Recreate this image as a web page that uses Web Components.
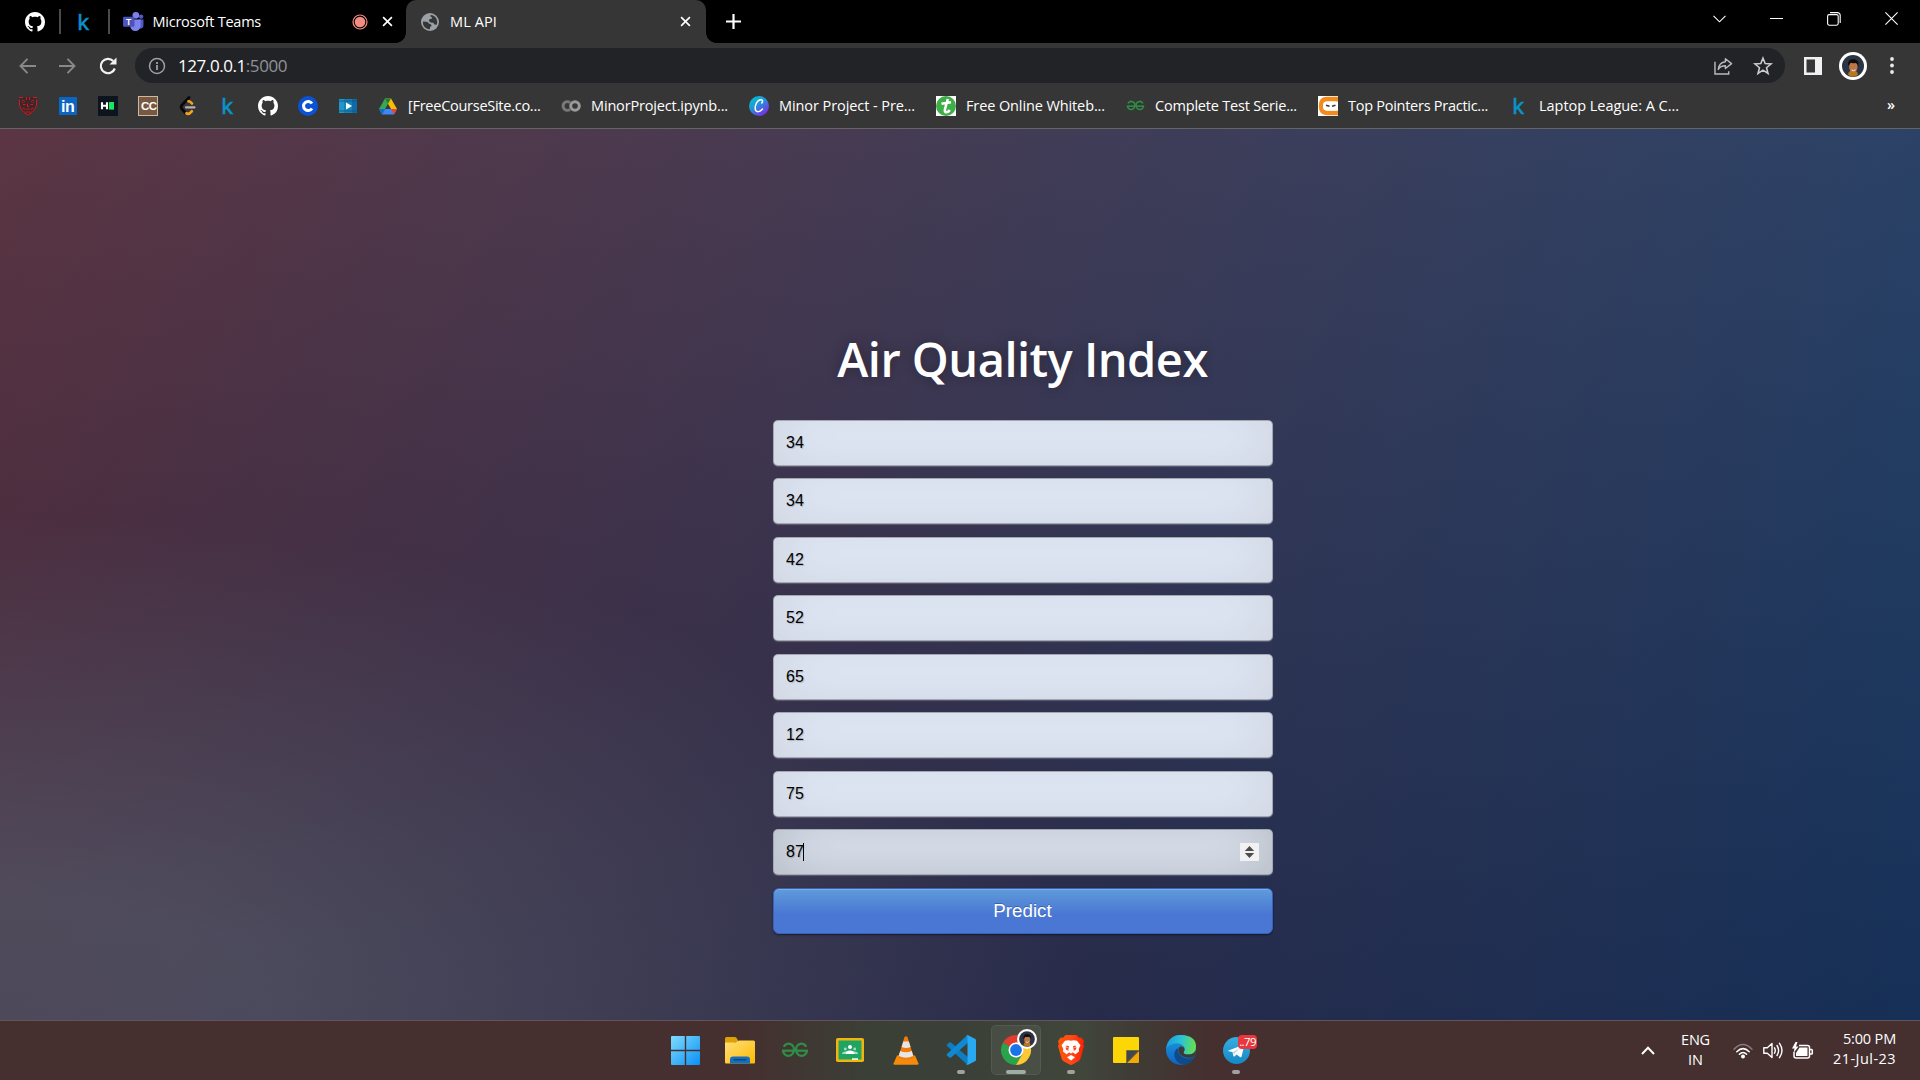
<!DOCTYPE html>
<html lang="en">
<head>
<meta charset="utf-8">
<title>ML API</title>
<style>
html,body{margin:0;height:100%;overflow:hidden;background:#000}
body{font-family:"Open Sans","Noto Sans",sans-serif;color:#fff}
</style>
</head>
<body>
<desktop-screen></desktop-screen>
<script>
const face = `<circle cx="14" cy="14" r="14" fill="#fff"/><circle cx="14" cy="14" r="11" fill="#2b3344"/><path d="M9 22.500q1-4.500 5-4.500t5 4.500q-2 2.300-5 2.300t-5-2.300z" fill="#b5791c"/><ellipse cx="14.300" cy="15" rx="4.200" ry="5.600" fill="#bb7748"/><path d="M9.300 14q-1.500-6.500 4.700-7 6.700.5 5.500 7.500-.8-3-2.500-3.600-3.500.6-5.300-.1-1 1.200-2.400 3.200z" fill="#120d0d"/><path d="M12.500 18q2.200 1.600 4-.2" stroke="#fff" stroke-width=".9" fill="none"/>`;
const gfg = `<g fill="none" stroke="#2f8d46" stroke-width="2.300"><path d="M1 7.700h26"/><path d="M2.800 3.800a5.300 5.300 0 0 1 9.900 3.700 5.300 5.300 0 1 1-10.600 0"/><path d="M25.200 3.800a5.300 5.300 0 0 0-9.900 3.700 5.300 5.300 0 1 0 10.600 0"/></g>`;
const ICONS = {
  github:['0 0 16 16','<path fill="#fff" d="M8 0C3.580 0 0 3.580 0 8c0 3.540 2.290 6.530 5.470 7.590.4.070.55-.17.55-.38 0-.19-.010-.82-.010-1.490-2.010.37-2.530-.49-2.690-.94-.090-.23-.48-.94-.82-1.130-.28-.15-.68-.52-.010-.53.63-.010 1.080.58 1.230.82.72 1.210 1.870.87 2.330.66.070-.52.28-.87.51-1.070-1.780-.2-3.640-.89-3.640-3.950 0-.87.31-1.590.82-2.150-.080-.2-.36-1.020.080-2.120 0 0 .67-.21 2.200.82.64-.18 1.320-.27 2-.27s1.360.090 2 .27c1.530-1.040 2.200-.82 2.200-.82.44 1.100.16 1.920.080 2.120.51.56.82 1.270.82 2.150 0 3.070-1.870 3.750-3.650 3.950.29.25.54.73.54 1.480 0 1.070-.010 1.930-.010 2.200 0 .21.15.46.55.38A8.010 8.010 0 0 0 16 8c0-4.420-3.580-8-8-8z"/>'],
  kaggle:['0 0 20 20','<text x="3.300" y="18.200" font-family="Open Sans" font-size="22.500" fill="#0a94cc" stroke="#0a94cc" stroke-width=".7">k</text>'],
  teams:['0 0 22 20','<circle cx="13.500" cy="3.500" r="3.500" fill="#7b83eb"/><circle cx="19" cy="4.800" r="2.300" fill="#5059c9"/><path d="M16 8h5.500v6.500a3 3 0 0 1-5.500 1.500z" fill="#5059c9"/><path d="M7.500 8h11v6.500a5.500 5.500 0 0 1-11 0z" fill="#7b83eb"/><rect x="0" y="5" width="12" height="10.500" rx="1" fill="#4b53bc"/><text x="3" y="13.500" font-family="Liberation Sans" font-weight="bold" font-size="9" fill="#fff">T</text>'],
  rec:['0 0 16 16','<circle cx="8" cy="8" r="7" fill="none" stroke="#f28b82" stroke-width="1.200"/><circle cx="8" cy="8" r="5.300" fill="#f28b82"/>'],
  close:['0 0 12 12','<path d="M1.200 1.200l9.600 9.600M10.800 1.200L1.200 10.800" stroke="#fff" stroke-width="1.800"/>'],
  globe:['0 0 18 18','<circle cx="9" cy="9" r="9" fill="#9aa0a6"/><path d="M2 8.500l3.300.3q2 .2 2.500 1.700l2 .8q1 .8.600 2l-1.400.8v2.200q-4.500-.2-6.300-3.500Q1.700 11 2 8.500zM9.500 1.900q4 .1 6 3.800 1.200 2.800.3 6l-2.300-.3-1.300-1.600-2.700-.3-1.700-1.700.7-1.500 2.200-.5.300-1.500-1.500-.8z" fill="#363636"/>'],
  plus:['0 0 15 15','<path d="M7.500 0v15M0 7.500h15" stroke="#fff" stroke-width="2.200"/>'],
  chev:['0 0 13 8','<path d="M.5 .8l6 6 6-6" fill="none" stroke="#fff" stroke-width="1.100"/>'],
  min:['0 0 13 2','<path d="M0 .5h13" stroke="#fff"/>'],
  restore:['0 0 14 14','<rect x=".6" y="2.600" width="10.600" height="10.600" rx="1.600" fill="none" stroke="#fff" stroke-width="1.100"/><path d="M3 .6h7.500a2.700 2.700 0 0 1 2.700 2.700V11" fill="none" stroke="#fff" stroke-width="1.100"/>'],
  winx:['0 0 13 13','<path d="M.4 .4l12.200 12.200M12.600 .4L.4 12.600" stroke="#fff" stroke-width="1.100"/>'],
  back:['0 0 17 16','<path d="M8.500 .8L1.500 8l7 7.200M1.500 8H17" fill="none" stroke="#898989" stroke-width="1.900"/>'],
  fwd:['0 0 17 16','<path d="M8.500 .8l7 7.200-7 7.200M15.500 8H0" fill="none" stroke="#898989" stroke-width="1.900"/>'],
  reload:['0 0 18 18','<path d="M15.800 11.500A7.200 7.200 0 1 1 14.200 4" fill="none" stroke="#f1f3f4" stroke-width="2.200"/><path d="M17.500 .6v7h-7z" fill="#f1f3f4"/>'],
  info:['0 0 18 18','<circle cx="9" cy="9" r="7.500" fill="none" stroke="#9aa0a6" stroke-width="1.500"/><path d="M9 8v5M9 5v1.900" stroke="#9aa0a6" stroke-width="1.800"/>'],
  share:['0 0 20 19','<path d="M1 5v13h14.500v-3" fill="none" stroke="#b9bbbd" stroke-width="1.500"/><path d="M12 1.800l6.500 5.200-6.500 5.200V9.300c-4 0-6 1.200-7.500 3.700C5 8.500 7.500 5.500 12 5z" fill="none" stroke="#b9bbbd" stroke-width="1.500" stroke-linejoin="round"/>'],
  star:['0 0 20 20','<path d="M10 2.200l2.200 5.400 5.800.4-4.500 3.700 1.500 5.700-5-3.200-5 3.200 1.500-5.700L2 8l5.800-.4z" fill="none" stroke="#c9cbcd" stroke-width="1.600"/>'],
  panel:['0 0 18 18','<rect width="18" height="18" fill="#f1f1f4"/><rect x="2.500" y="2.500" width="8.500" height="13" fill="#363636"/>'],
  avatar:['0 0 28 28',face],
  dots:['0 0 4 17','<circle cx="2" cy="2" r="1.900" fill="#e8eaed"/><circle cx="2" cy="8.500" r="1.900" fill="#e8eaed"/><circle cx="2" cy="15" r="1.900" fill="#e8eaed"/>'],
  shield:['0 0 20 20','<path d="M1 1l5 .5L10 .5l4 1 5-.5-.5 9Q17 16 10 19.500 3 16 1.500 10z" fill="#3d2528"/><g stroke="#d01a20" fill="none" stroke-width="1"><path d="M1 1.500h4M15 1.500h4M1.500 3.500v6q1.500 6 8.500 9.500 7-3.500 8.500-9.500v-6M4 4l3 1.500M16 4l-3 1.500M5 8.500h2.500M12.500 8.500H15M4.500 12l3 1.500M15.500 12l-3 1.500M8 16h4M8.500 1v3M11.500 1v3M9.500 7.500v3h1.500M8.500 13h3M6.500 15.500l1 1M13.500 15.500l-1 1M4 6.500h1M15 6.500h1"/></g>'],
  linkedin:['0 0 18 18','<rect width="18" height="18" rx="1" fill="#0a66c2"/><text x="2" y="15" font-family="Liberation Sans" font-weight="bold" font-size="16" letter-spacing="-.4" fill="#fff">in</text>'],
  hr:['0 0 20 20','<rect width="20" height="20" fill="#0e141e"/><path d="M4 6.300v7M9 6.300v7M4 9.800h5" stroke="#fff" stroke-width="2.100"/><rect x="11" y="6" width="5" height="7.600" fill="#18e660"/>'],
  cc:['0 0 20 20','<rect x=".5" y=".5" width="19" height="19" fill="#785940" stroke="#cdb9a8"/><text x="3" y="14" font-family="Liberation Sans" font-weight="bold" font-size="11.500" letter-spacing="-.6" fill="#fff">CC</text>'],
  leet:['0 0 20 20','<path d="M11 1.500L3.500 9.500q-1 1.500 0 3L7.500 17" fill="none" stroke="#080808" stroke-width="2.800" stroke-linecap="round"/><path d="M10.500 5.300q1.500-.3 3.500 2.200M8.500 17.300q2.200 1.600 5.300-2" fill="none" stroke="#f5a31b" stroke-width="2.700" stroke-linecap="round"/><path d="M8 11.300h8.500" stroke="#b3b3b3" stroke-width="2.200" stroke-linecap="round"/>'],
  coin:['0 0 20 20','<circle cx="10" cy="10" r="10" fill="#0a52d6"/><path d="M14 7.500A4.600 4.600 0 1 0 14 12.500" fill="none" stroke="#fff" stroke-width="3"/>'],
  play:['0 0 18 14','<rect width="18" height="14" fill="#0f6ba8"/><path d="M0 0h5v14H0z" fill="#2196c9"/><path d="M5 0h8v14H5z" fill="#1583bb"/><path d="M0 2h18M0 12h18" stroke="#0a5482" stroke-width=".8"/><path d="M7 3.500l6 3.500-6 3.500z" fill="#fff"/>'],
  drive:['0 0 18 17','<path d="M6 .5h6l6 10.500h-6z" fill="#fbbc04"/><path d="M6 .5l3 5.200L3 16.500 0 11z" fill="#34a853"/><path d="M3 16.500L6 11h12l-3 5.500z" fill="#4285f4"/><path d="M6 .5h6L9 5.700z" fill="#188038"/><path d="M12 11h6l-3 5.500z" fill="#ea4335"/><path d="M0 11h6l-3 5.500z" fill="#1967d2"/>'],
  colab:['0 0 20 12','<g fill="none" stroke-width="3"><circle cx="14" cy="6" r="4.300" stroke="#9a9a9a"/><path d="M9 2.600A4.300 4.300 0 1 0 9 9.400" stroke="#787878"/></g>'],
  canva:['0 0 20 20','<defs><linearGradient id="g" x1="0" y1="0" x2=".7" y2="1"><stop offset="0" stop-color="#00c4cc"/><stop offset=".45" stop-color="#1e9bd8"/><stop offset="1" stop-color="#7d2ae8"/></linearGradient></defs><circle cx="10" cy="10" r="10" fill="url(#g)"/><path d="M12.800 7q1.700-2.600-.4-3.200Q9.500 3.400 7.500 7q-2.200 4.500-.8 7.500 2.500 3 6.800-1.500" fill="none" stroke="#fff" stroke-width="1.500" stroke-linecap="round"/>'],
  tboard:['0 0 20 20','<rect width="20" height="20" fill="#fff"/><circle cx="10" cy="10" r="10" fill="#3fae49"/><path d="M5.500 7.800Q10 7 15 6.300M11.800 3L9 13q-.7 3.500 1.500 3.300 2-.3 3.300-2.300" fill="none" stroke="#fff" stroke-width="2.600"/>'],
  gfg:['0 0 28 15',gfg],
  ninja:['0 0 20 20','<rect width="20" height="20" fill="#fff"/><path d="M20 .8H9Q.8 .8 .8 10T9 19.200h11v-4.500H9.500Q5.500 14.500 5.500 10t4-4.500H20z" fill="#f28a1e"/><rect x="5" y="5.500" width="15" height="9" rx="3.500" fill="#fff"/><path d="M8 9.200l3.500 1M17.500 9.200l-3.500 1" stroke="#3c3c3c" stroke-width="1.700"/>'],
  win:['0 0 29 29','<defs><linearGradient id="g" x1="0" y1="0" x2="1" y2="1" ><stop offset="0" stop-color="#7fdcff"/><stop offset="1" stop-color="#0a8ff5"/></linearGradient></defs><path d="M0 1q0-1 1-1h12.800v13.800H0zM15.200 0H28q1 0 1 1v12.800H15.200zM0 15.200h13.800V29H1q-1 0-1-1zM15.200 15.200H29V28q0 1-1 1H15.200z" fill="url(#g)"/>'],
  folder:['0 0 30 27','<defs><linearGradient id="g" x1="0" y1="0" x2="1" y2="1"><stop offset="0" stop-color="#ffe07a"/><stop offset="1" stop-color="#ffb900"/></linearGradient></defs><path d="M0 1.500Q0 0 1.500 0h8.300q1 0 1.800 1l2 3.500L0 9z" fill="#dfa006"/><path d="M0 5.500h10.500l3.500-2H28.500q1.500 0 1.500 1.500v20.500q0 1-1 1H1q-1 0-1-1z" fill="url(#g)"/><path d="M5 26.500v-4q0-3 3-3h14q3 0 3 3v4z" fill="#1470be"/><rect x="8.500" y="22" width="13" height="1.600" rx=".8" fill="#0a4582"/>'],
  classroom:['0 0 28 24','<rect width="28" height="24" rx="1.800" fill="#f2b50c"/><rect x="2.500" y="2.500" width="23" height="19" fill="#1fa463"/><circle cx="14" cy="9" r="2" fill="#fff"/><circle cx="9.300" cy="11" r="1.400" fill="#a5dbc0"/><circle cx="18.700" cy="11" r="1.400" fill="#a5dbc0"/><path d="M6 16q0-2.500 3.500-2.500h9q3.500 0 3.500 2.500z" fill="#a5dbc0"/><path d="M9.500 16q0-3.500 4.500-3.500t4.500 3.500z" fill="#fff"/><path d="M16 20.300h6v1.500h-6z" fill="#fff"/>'],
  vlc:['0 0 26 29','<path d="M4 19.500h18l3.500 8q0 1.200-1.200 1.200H1.500Q.3 28.700.5 27.500z" fill="#f58a0b"/><path d="M11.500 1q1.500-1.500 3 0l6.300 20.500q-7.800 4.500-15.600 0z" fill="#f27a0a"/><path d="M10.300 5.500h5.500l1.800 5.500q-4.500 1.800-9 0zM7.200 15q5.800 2.500 11.600 0l1.500 5q-7.300 3.500-14.600 0z" fill="#e6e6e6"/>'],
  vscode:['0 0 30 30','<path d="M1 9.500L3.300 7.500q.8-.6 1.700 0l17 14.800V29L21 29.500 1 11q-.6-.8 0-1.500z" fill="#0b7ec4"/><path d="M1 20.500l2.300 2q.8.600 1.700 0L22 7.700V1L21 .5 1 19q-.6.800 0 1.500z" fill="#1089d4"/><path d="M22 .3l7 3.400q1 .5 1 1.500v19.600q0 1-1 1.500l-7 3.400q-1.300.3-2-.7 1.500.5 1.500-1.500V2.500Q21.500.5 20 1q.7-1 2-.7z" fill="#29a9f2"/>'],
  chrome:['0 0 30 30','<path d="M15 15L2 7.500A15 15 0 0 1 28 7.500z" fill="#e33b2e"/><path d="M15 15L2 7.500A15 15 0 0 0 15 30l6.500-11.200z" fill="#2ba24c"/><path d="M15 7.500h13A15 15 0 0 1 15 30l6.500-11.200z" fill="#fcc934"/><circle cx="15" cy="15" r="7.500" fill="#fff"/><circle cx="15" cy="15" r="5.900" fill="#1a73e8"/>'],
  brave:['0 0 26 30','<defs><linearGradient id="g"><stop offset="0" stop-color="#ff5500"/><stop offset=".5" stop-color="#ff4a18"/><stop offset="1" stop-color="#ff1e00"/></linearGradient></defs><path d="M7.500 0h11l2.500 2.800 2.300-.3L26 6l-.8 3 .8 2-3.500 12.500q-.6 1.700-2 2.700L14.500 29.600q-1.500.8-3 0L5.500 26.200q-1.400-1-2-2.700L0 11l.8-2L0 6l2.700-3.500 2.300.3z" fill="url(#g)"/><path d="M13 5.800l2.500-.6 3.500.6 3.500 4.500-1.800 3.700.3 2.500-3.500 2.800-2.500-1.800v-1.300l2.700-1.400 1-2.300-3.400.4.500 2-.8 2.400L13 18.500l-2-1.200-.8-2.400.5-2-3.400-.4 1 2.300 2.700 1.400v1.300l-2.500 1.800L5 16.500l.3-2.500-1.800-3.700L7 5.800l3.500-.6z" fill="#fff"/><path d="M8.500 10.500l2.500.8v1.500l-3-.6zM17.500 10.500l-2.500.8v1.500l3-.6z" fill="#ff4515"/><path d="M13 20l4 2.200-4 3.300-4-3.300z" fill="#fff"/>'],
  sticky:['0 0 26 26','<path d="M0 1q0-1 1-1h24q1 0 1 1v12L13 26H1q-1 0-1-1z" fill="#fcd705"/><path d="M26 14L14 26h11q1 0 1-1z" fill="#f0aa08"/><path d="M13.300 13.300H26L13.300 26z" fill="#45464b"/>'],
  edge:['0 0 30 30','<defs><linearGradient id="g" x1="0" y1=".3" x2="1" y2=".4"><stop offset="0" stop-color="#1a9de0"/><stop offset=".5" stop-color="#2cc3d3"/><stop offset="1" stop-color="#66e04a"/></linearGradient><linearGradient id="h" x1="0" y1="0" x2="0" y2="1"><stop offset="0" stop-color="#1b9de2"/><stop offset="1" stop-color="#0f62c0"/></linearGradient></defs><circle cx="15" cy="15" r="15" fill="url(#h)"/><path d="M.3 13.500Q2 0 15 0q15 .5 15 11.500 0 8-7.500 8-5.500 0-5-2.500 2-1.500 1-4.500-2-4-8-4.200Q4 8.500.3 13.500z" fill="url(#g)"/><path d="M11 13.500q-3.500 3-2.500 8 2 7.500 9.500 8.300Q25 29 28.300 22q-5 2.500-10 .8Q11.500 20 12 14z" fill="#114a8b"/><path d="M12.500 13q2-2.300 5-.8 1.800 2 .1 4.800-.5 2.500 4.900 2.600 5 0 7.500-4.500 0 3.500-1.600 6.400-5 2.200-10 .5Q11.500 19.500 12.500 13z" fill="#3c3834"/>'],
  telegram:['0 0 27 27','<defs><linearGradient id="g" x1="0" y1="0" x2="0" y2="1"><stop offset="0" stop-color="#37aee2"/><stop offset="1" stop-color="#1488c4"/></linearGradient></defs><circle cx="13.500" cy="13.500" r="13.500" fill="url(#g)"/><path d="M5.500 13.500L20 8q1.300-.2 1 1.300L18.600 19.500q-.4 1.200-1.600.5l-3.500-2.600-2 2q-1 .6-1.200-.6l-.8-3.800-3.800-.7q-1-.4-.2-.8z" fill="#fff"/><path d="M10 15l7.500-4.500-6 5.700-.3 2.800z" fill="#b9d6e8"/>'],
  up:['0 0 14 9','<path d="M1 8l6-6.200L13 8" fill="none" stroke="#fff" stroke-width="2"/>'],
  wifi:['0 0 20 16','<g fill="none" stroke-linecap="round" stroke-width="1.500"><path d="M1 6.200Q10-3 19 6.200" stroke="#8b7c7b"/><path d="M3.800 8.700q6.200-6.200 12.400 0M6.400 11.300q3.600-3.600 7.200 0" stroke="#fff"/></g><circle cx="10" cy="13.500" r="2" fill="#fff"/>'],
  vol:['0 0 20 17','<path d="M.8 5.800h3.500L9 1.500v14l-4.700-4.300H.8z" fill="none" stroke="#fff" stroke-width="1.400" stroke-linejoin="round"/><path d="M11.500 5.800q1.600 2.700 0 5.400M14 3.500q3.200 5 0 10M16.500 1.300q5 7.200 0 14.400" fill="none" stroke="#fff" stroke-width="1.400" stroke-linecap="round"/>'],
  bat:['0 0 21 18','<path d="M7 3.500h8.500q2 0 2 2v8.500q0 2-2 2H4q-2 0-2-2V10M18 7.500h1.500q.8 0 .8.800v3q0 .8-.8.800H18" fill="none" stroke="#fff" stroke-width="1.500"/><path d="M7.500 5.500h8v8.500H4v-3z" fill="#fff"/><path d="M3.500 0L0 6.500h2.500L1.500 11 6.500 4.500H4L5.500 0z" fill="#fff"/>']
};

const define=(name,html,init)=>{
  const t=document.createElement('template'); t.innerHTML=html;
  customElements.define(name,class extends HTMLElement{
    connectedCallback(){
      if(this.shadowRoot)return;
      const r=this.attachShadow({mode:'open'}); r.append(t.content.cloneNode(true));
      if(init)init.call(this,r);
    }
  });
};

/* <svg-icon name w h>: one drawing from the icon set */
customElements.define('svg-icon',class extends HTMLElement{
  connectedCallback(){
    if(this.shadowRoot)return;
    const [vb,body]=ICONS[this.getAttribute('name')];
    const w=this.getAttribute('w'),h=this.getAttribute('h')||w;
    this.attachShadow({mode:'open'}).innerHTML=`<style>:host{display:block;flex:none;width:${w}px;height:${h}px}svg{display:block;overflow:visible}</style><svg viewBox="${vb}" width="${w}" height="${h}">${body}</svg>`;
  }
});

/* <fit-text w>: a single line tracked to a given width */
define('fit-text',`<style>:host{display:block;flex:none;white-space:pre}span{display:inline-block}</style><span><slot></slot></span>`,function(r){
  const s=r.querySelector('span'),w=+this.getAttribute('w');
  s.style.letterSpacing='0px';
  const n=s.getBoundingClientRect().width;
  s.style.letterSpacing=((w-n)/this.textContent.length)+'px';
});

define('tab-strip',`<style>
:host{display:flex;height:43px;background:#000;font-size:14.500px;align-items:stretch;box-sizing:border-box}
div{display:flex;align-items:center}
.pin{width:49px;justify-content:center;box-sizing:border-box}
.sep{width:1.500px;height:25px;background:#4b4b4b;align-self:center}
.teams{width:297px;padding-left:13px;box-sizing:border-box}
.active{width:300px;background:#363636;border-radius:10px 10px 0 0;padding-left:15.500px;box-sizing:border-box;position:relative;margin-left:-1px}
.active:before,.active:after{content:"";position:absolute;bottom:0;width:10px;height:10px}
.active:before{left:-10px;background:radial-gradient(circle at 0 0,transparent 9.500px,#363636 10px)}
.active:after{right:-10px;background:radial-gradient(circle at 100% 0,transparent 9.500px,#363636 10px)}
fit-text{margin-top:-1px}
.win{margin-left:auto;align-items:flex-start;padding:12px 22.500px 0 0}
</style>
<div class="pin" style="width:59px;padding-left:11px"><svg-icon name="github" w="20"></svg-icon></div><div class="sep"></div>
<div class="pin" style="width:47.500px"><svg-icon name="kaggle" w="20"></svg-icon></div><div class="sep"></div>
<div class="teams"><svg-icon name="teams" w="21" h="19"></svg-icon><fit-text w="108.500" style="margin-left:9px">Microsoft Teams</fit-text><svg-icon name="rec" w="16" style="margin-left:90.500px"></svg-icon><svg-icon name="close" w="11" style="margin-left:14px"></svg-icon></div>
<div class="active"><svg-icon name="globe" w="18"></svg-icon><fit-text w="47" style="margin-left:11px">ML API</fit-text><svg-icon name="close" w="11" style="margin-left:182.500px"></svg-icon></div>
<svg-icon name="plus" w="15" style="margin:14px 0 0 20px"></svg-icon>
<div class="win"><svg-icon name="chev" w="13" h="8" style="margin-top:3px"></svg-icon><svg-icon name="min" w="13" h="2" style="margin:6px 0 0 44px"></svg-icon><svg-icon name="restore" w="14" style="margin-left:43.500px"></svg-icon><svg-icon name="winx" w="13" style="margin-left:44px"></svg-icon></div>`);

define('address-bar',`<style>
:host{display:flex;height:45px;align-items:center;background:#363636;box-sizing:border-box;padding:0 26px 0 19px}
.omni{flex:none;display:flex;align-items:center;width:1650px;height:35px;border-radius:18px;background:#222327;margin-left:18px;box-sizing:border-box;padding:0 12.500px 0 13px}
.url{margin-left:12px;font-size:17px;color:#fff}.url i{font-style:normal;color:#909398}
</style>
<svg-icon name="back" w="17" h="16"></svg-icon><svg-icon name="fwd" w="17" h="16" style="margin-left:23px"></svg-icon><svg-icon name="reload" w="18" style="margin-left:23px"></svg-icon>
<div class="omni"><svg-icon name="info" w="18"></svg-icon><fit-text class="url" w="109">127.0.0.1<i>:5000</i></fit-text>
<svg-icon name="share" w="19" h="18" style="margin-left:auto"></svg-icon><svg-icon name="star" w="20" style="margin-left:20px"></svg-icon></div>
<svg-icon name="panel" w="18" style="margin-left:18.500px"></svg-icon><svg-icon name="avatar" w="28" style="margin-left:17.500px"></svg-icon><svg-icon name="dots" w="4" h="17" style="margin-left:23px"></svg-icon>`);

define('book-mark',`<style>:host{display:flex;align-items:center;flex:none;box-sizing:border-box}.i{width:20px;display:flex;justify-content:center;margin-right:10px}::slotted(fit-text){margin-top:-2px}</style><div class="i"><slot name="icon"></slot></div><slot></slot>`);

define('bookmark-bar',`<style>
:host{display:flex;height:41px;align-items:center;background:#363636;border-bottom:1px solid #656565;box-sizing:border-box;padding:0 24px 4px 8px;font-size:14.500px}
.q{width:40px;flex:none;display:flex;justify-content:center}
</style>
<div class="q"><svg-icon name="shield" w="20"></svg-icon></div><div class="q"><svg-icon name="linkedin" w="18"></svg-icon></div><div class="q"><svg-icon name="hr" w="20"></svg-icon></div><div class="q"><svg-icon name="cc" w="20"></svg-icon></div><div class="q"><svg-icon name="leet" w="20"></svg-icon></div><div class="q"><svg-icon name="kaggle" w="20"></svg-icon></div><div class="q"><svg-icon name="github" w="20"></svg-icon></div><div class="q"><svg-icon name="coin" w="20"></svg-icon></div><div class="q"><svg-icon name="play" w="18" h="14"></svg-icon></div>
<book-mark style="width:183px;margin-left:10px"><svg-icon slot="icon" name="drive" w="18" h="17"></svg-icon><fit-text w="132.500">[FreeCourseSite.co...</fit-text></book-mark>
<book-mark style="width:188px"><svg-icon slot="icon" name="colab" w="20" h="12"></svg-icon><fit-text w="137">MinorProject.ipynb...</fit-text></book-mark>
<book-mark style="width:187px"><svg-icon slot="icon" name="canva" w="20"></svg-icon><fit-text w="136">Minor Project - Pre...</fit-text></book-mark>
<book-mark style="width:189px"><svg-icon slot="icon" name="tboard" w="20"></svg-icon><fit-text w="139">Free Online Whiteb...</fit-text></book-mark>
<book-mark style="width:193px"><svg-icon slot="icon" name="gfg" w="19" h="10"></svg-icon><fit-text w="142">Complete Test Serie...</fit-text></book-mark>
<book-mark style="width:191px"><svg-icon slot="icon" name="ninja" w="20"></svg-icon><fit-text w="140">Top Pointers Practic...</fit-text></book-mark>
<book-mark><svg-icon slot="icon" name="kaggle" w="20"></svg-icon><fit-text w="140">Laptop League: A C...</fit-text></book-mark>
<fit-text w="9" style="margin-left:auto;font-weight:600;margin-top:-3px">»</fit-text>`);

define('number-field',`<style>
:host{display:flex;align-items:center;box-sizing:border-box;height:45.940px;margin-bottom:12.500px;padding:0 12.500px;border:1px solid rgba(0,0,0,.3);border-radius:5px;background:#e8f0fe;color:#000;font:16px "Liberation Sans",Arial,sans-serif;text-shadow:1px 1px 1px rgba(0,0,0,.2);box-shadow:inset 0 -6.250px 56.250px rgba(100,100,100,.2),0 1px 1px rgba(255,255,255,.2)}
:host([active]){box-shadow:inset 0 -6.250px 56.250px rgba(100,100,100,.4),0 1px 1px rgba(255,255,255,.2)}
.caret,.spin{display:none}
:host([active]) .caret{display:block;width:1px;height:18px;background:#000;margin-left:-.8px}
:host([active]) .spin{display:block;margin-left:auto}
</style><slot></slot><div class="caret"></div><svg class="spin" width="19" height="18" viewBox="0 0 19 18"><rect width="19" height="18" fill="#f1f1f1"/><path d="M9.500 3l4.700 5H4.800zM9.500 15l4.700-5H4.800z" fill="#4d4d4d"/></svg>`);

define('predict-button',`<style>
:host{display:flex;align-items:center;justify-content:center;box-sizing:border-box;height:46px;border:1px solid #3762bc;border-radius:6px;font:18.750px "Liberation Sans",Arial,sans-serif;color:#fff;text-shadow:0 -1px 0 rgba(0,0,0,.25);background:#4a77d4 linear-gradient(#6eb6de,#4a77d4) 0 -18.750px repeat-x;box-shadow:inset 0 1px 0 rgba(255,255,255,.2),0 1px 2px rgba(0,0,0,.5)}
</style><slot></slot>`);

define('aqi-page',`<style>
:host{display:flex;flex-direction:column;align-items:flex-start;height:891px;box-sizing:border-box;padding:190px 0 0 772.500px;
background:radial-gradient(ellipse farthest-corner at 0% 100%,rgba(104,128,138,.4) 10%,rgba(138,114,76,0) 40%),linear-gradient(to bottom,rgba(57,173,219,.25) 0%,rgba(42,60,87,.4) 100%),linear-gradient(135deg,#670d10 0%,#092756 100%)}
form{width:500px;display:flex;flex-direction:column}
h1{margin:0;height:101px;font-size:47px;line-height:80px;font-weight:600;text-shadow:0 0 12px rgba(0,0,0,.3);display:flex;justify-content:center}
</style>
<form><h1><fit-text w="370.500">Air Quality Index</fit-text></h1>
<number-field>34</number-field><number-field>34</number-field><number-field>42</number-field><number-field>52</number-field><number-field>65</number-field><number-field>12</number-field><number-field>75</number-field><number-field active>87</number-field>
<predict-button>Predict</predict-button></form>`);

define('task-item',`<style>
:host{display:flex;width:50px;height:50px;align-items:center;justify-content:center;position:relative;border-radius:5px;flex:none;box-sizing:border-box}
:host([focus]){background:rgba(255,255,255,.06);box-shadow:inset 0 0 0 1px rgba(255,255,255,.07)}
i{display:none;position:absolute;bottom:1px;width:8px;height:4px;border-radius:2px;background:#a3a09f}
:host([run]) i{display:block}:host([focus]) i{width:20px;background:#9fada5}
::slotted(.badge){position:absolute}
</style><slot></slot><i></i>`);

define('task-bar',`<style>
:host{display:flex;height:60px;box-sizing:border-box;border-top:1px solid #62545a;align-items:center;background:linear-gradient(90deg,#452f2f 0,#452f2f 740px,#3a4036 870px,#3a4037 960px,#41463b 1080px,#3f3c36 1130px,#452f2f 1210px,#452f2f 100%)}
.apps{display:flex;gap:5.100px;margin-left:660.200px;padding-bottom:1px}
.tray{display:flex;align-items:center;margin-left:auto;padding-right:24px;font-size:14.500px;line-height:20px}
.col{display:flex;flex-direction:column}
.n{background:#e8373d;border-radius:4px;font-size:11.500px;line-height:14px;height:14px;width:19px;right:4px;top:10px;display:flex;justify-content:center}
</style>
<div class="apps">
<task-item><svg-icon name="win" w="29"></svg-icon></task-item>
<task-item><svg-icon name="folder" w="30" h="27"></svg-icon></task-item>
<task-item><svg-icon name="gfg" w="28" h="15"></svg-icon></task-item>
<task-item><svg-icon name="classroom" w="28" h="24"></svg-icon></task-item>
<task-item><svg-icon name="vlc" w="26" h="29"></svg-icon></task-item>
<task-item run><svg-icon name="vscode" w="30"></svg-icon></task-item>
<task-item run focus><svg-icon name="chrome" w="30"></svg-icon><svg-icon class="badge" name="avatar" w="20" style="right:4px;top:4px"></svg-icon></task-item>
<task-item run><svg-icon name="brave" w="26" h="30"></svg-icon></task-item>
<task-item><svg-icon name="sticky" w="26"></svg-icon></task-item>
<task-item><svg-icon name="edge" w="30"></svg-icon></task-item>
<task-item run><svg-icon name="telegram" w="27"></svg-icon><div class="badge n"><fit-text w="17">..79</fit-text></div></task-item>
</div>
<div class="tray"><svg-icon name="up" w="14" h="9"></svg-icon>
<div class="col" style="margin:-2px 0 0 26px;align-items:center"><fit-text w="29">ENG</fit-text><fit-text w="15">IN</fit-text></div>
<svg-icon name="wifi" w="20" h="16" style="margin-left:23px"></svg-icon><svg-icon name="vol" w="20" h="17" style="margin-left:10px"></svg-icon><svg-icon name="bat" w="21" h="18" style="margin-left:9px"></svg-icon>
<div class="col" style="margin:-3px 0 0 20px;align-items:flex-end"><fit-text w="53">5:00 PM</fit-text><fit-text w="63">21-Jul-23</fit-text></div></div>`);

define('desktop-screen',`<style>:host{display:flex;flex-direction:column;width:1920px;height:1080px;overflow:hidden}</style>
<tab-strip></tab-strip><address-bar></address-bar><bookmark-bar></bookmark-bar><aqi-page></aqi-page><task-bar></task-bar>`);
</script>
</body>
</html>
